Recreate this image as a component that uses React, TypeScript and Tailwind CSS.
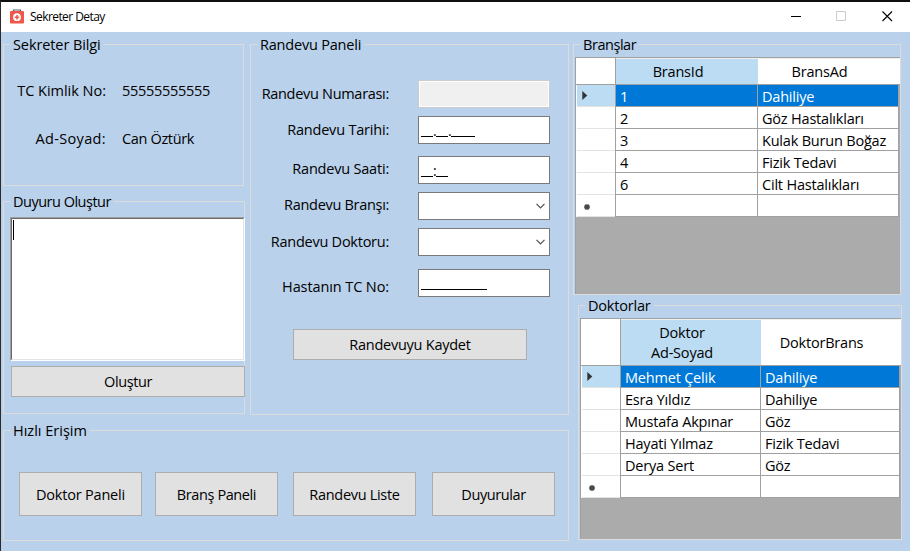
import React from "react";

type GroupProps = { title: string; titleClass?: string; className: string; children: React.ReactNode };

function GroupBox({ title, titleClass = "", className, children }: GroupProps) {
  return (
    <fieldset className={`min-w-0 shrink-0 border border-[#dcdcdc] pl-[6px] ${className}`}>
      <legend className={`h-[19px] px-[3px] leading-[19px] whitespace-nowrap ${titleClass}`}>{title}</legend>
      <div className="-ml-[6px]">{children}</div>
    </fieldset>
  );
}

function Button({ className, children }: { className: string; children: React.ReactNode }) {
  return (
    <button className={`flex shrink-0 items-center justify-center border border-[#adadad] bg-[#e1e1e1] whitespace-nowrap ${className}`}>
      {children}
    </button>
  );
}

function FormRow({ label, className, labelClass, children }: { label: string; className: string; labelClass: string; children: React.ReactNode }) {
  return (
    <div className={`flex h-7 items-start ${className}`}>
      <div className={`w-[138px] shrink-0 text-right leading-5 whitespace-nowrap ${labelClass}`}>{label}</div>
      <div className="ml-[29px] h-7 w-[132px] shrink-0">{children}</div>
    </div>
  );
}

function Select() {
  return (
    <div className="flex h-7 items-center justify-end border border-[#7a7a7a] bg-white pr-1">
      <svg width="9" height="6" viewBox="0 0 9 6" fill="none" stroke="#505050" strokeWidth="1.2">
        <path d="M.5 .8 4.5 4.8 8.5 .8" />
      </svg>
    </div>
  );
}

function Mask({ parts, className }: { parts: (number | string)[]; className: string }) {
  return (
    <div className={`flex h-7 items-end border border-[#7a7a7a] bg-white pl-[2px] ${className}`}>
      {parts.map((part, i) =>
        typeof part === "number" ? (
          <span key={i} className="h-px bg-black" style={{ width: part }} />
        ) : (
          <span key={i} className="w-[3px] text-center text-[14px] leading-[12px]">{part}</span>
        )
      )}
    </div>
  );
}

function Marker({ kind }: { kind: string }) {
  if (kind === "arrow")
    return (
      <svg className="ml-[5px]" width="6" height="9" viewBox="0 0 6 9">
        <path d="M.3 0 5.3 4.5.3 9Z" fill="#333" />
      </svg>
    );
  return (
    <svg className="mt-[3px] ml-[7px]" width="6" height="6" viewBox="0 0 6 6" stroke="#444" strokeWidth="1.3">
      <path d="M3 0v6M0 3h6M.8 .8l4.4 4.4M5.2 .8.8 5.2" />
    </svg>
  );
}

type GridProps = { heads: string[][]; rows: string[][]; size: string; headHeight: string; first: string; second: string };

function DataGrid({ heads, rows, size, headHeight, first, second }: GridProps) {
  return (
    <div className={`mt-[3px] ml-px border-t border-l border-[#a0a0a0] bg-[#ababab] ${size}`}>
      <div className={`flex border-b border-[#a0a0a0] bg-white ${headHeight}`}>
        <div className="w-10 shrink-0 border-r border-[#a0a0a0]" />
        {heads.map((lines, i) => (
          <div
            key={i}
            className={`flex shrink-0 flex-col justify-center border-t border-[#f0f0f0] pr-[18px] text-center leading-5 ${i === 0 ? `bg-[#bcdcf4] ${first}` : second}`}
          >
            {lines.map((line) => (
              <div key={line}>{line}</div>
            ))}
          </div>
        ))}
      </div>
      {rows.map((row, r) => {
        const selected = r === 0;
        const last = r === rows.length - 1;
        return (
          <div key={r} className={`flex h-[22px] leading-[24px] whitespace-nowrap ${selected ? "text-white" : ""}`}>
            <div className="flex w-10 shrink-0 border-r border-[#a0a0a0] bg-white pl-px">
              <div className={`flex grow items-center border-b border-[#e3e3e3] ${selected ? "bg-[#bcdcf4]" : ""}`}>
                {selected && <Marker kind="arrow" />}
                {last && <Marker kind="new" />}
              </div>
            </div>
            {row.map((cell, c) => (
              <div
                key={c}
                className={`shrink-0 border-r border-b border-[#a0a0a0] pl-[4px] ${selected ? "bg-[#0078d7]" : "bg-white"} ${c === 0 ? first : second}`}
              >
                {cell}
              </div>
            ))}
          </div>
        );
      })}
    </div>
  );
}

const branches = [
  ["1", "Dahiliye"],
  ["2", "Göz Hastalıkları"],
  ["3", "Kulak Burun Boğaz"],
  ["4", "Fizik Tedavi"],
  ["6", "Cilt Hastalıkları"],
  ["", ""],
];

const doctors = [
  ["Mehmet Çelik", "Dahiliye"],
  ["Esra Yıldız", "Dahiliye"],
  ["Mustafa Akpınar", "Göz"],
  ["Hayati Yılmaz", "Fizik Tedavi"],
  ["Derya Sert", "Göz"],
  ["", ""],
];

export default function App() {
  return (
    <div className="flex h-[551px] w-[910px] flex-col overflow-hidden border-t-2 border-l border-t-[#10100f] border-l-[#2a2a2a] bg-[#b9d1ea] font-['Open_Sans','Noto_Sans',sans-serif] text-[14.5px] tracking-[-0.2px] text-black">
      <header className="flex h-[30px] shrink-0 items-center bg-white pl-[9px]">
        <svg className="-mt-px" width="14" height="15" viewBox="0 0 14 15">
          <path d="M3.5 3V1h7v2" fill="none" stroke="#555e66" strokeWidth="1.2" />
          <rect y="2" width="14" height="12.5" rx="1" fill="#f0564a" />
          <circle cx="7" cy="8.2" r="3.9" fill="#fff" />
          <path d="M7 6v4.4M4.8 8.2h4.4" stroke="#f0564a" strokeWidth="1.5" />
        </svg>
        <h1 className="ml-[6px] text-[12px] leading-4 tracking-[-0.57px]">Sekreter Detay</h1>
        <div className="ml-auto flex items-center gap-[35px] pr-[17px]">
          <svg className="-mt-[2px]" width="11" height="11" viewBox="0 0 11 11"><path d="M1 5.5h10" stroke="#000" /></svg>
          <svg className="-mt-[2px]" width="11" height="11" viewBox="0 0 11 11"><path d="M.5.5h9v9h-9z" fill="none" stroke="#ccc" /></svg>
          <svg className="-mt-[2px]" width="11" height="11" viewBox="0 0 11 11"><path d="M.5.5l9.5 9.5M10 .5l-9.5 9.5" stroke="#000" strokeWidth="1.1" /></svg>
        </div>
      </header>

      <main className="flex pt-[3px] pl-[2px]">
        <div className="flex w-[570px] shrink-0 flex-col">
          <div className="flex">
            <div className="flex w-[247px] shrink-0 flex-col gap-[6px]">
              <GroupBox title="Sekreter Bilgi" titleClass="tracking-[-0.1px]" className="h-[151px] w-[241px]">
                <div className="flex flex-col gap-7 pt-[27px] leading-5">
                  <div className="flex">
                    <div className="w-[102px] text-right tracking-[-0.02px]">TC Kimlik No:</div>
                    <div className="ml-4 tracking-[-0.3px]">55555555555</div>
                  </div>
                  <div className="flex">
                    <div className="w-[102px] text-right tracking-[0.35px]">Ad-Soyad:</div>
                    <div className="ml-4 tracking-[-0.35px]">Can Öztürk</div>
                  </div>
                </div>
              </GroupBox>
              <GroupBox title="Duyuru Oluştur" titleClass="tracking-[-0.5px]" className="h-[222px] w-[242px]">
                <div className="mt-[6px] ml-[6px] h-[144px] w-[235px] border border-t-[#a0a0a0] border-r-white border-b-white border-l-[#a0a0a0]">
                  <div className="h-full border border-t-[#696969] border-r-[#e3e3e3] border-b-[#e3e3e3] border-l-[#696969] bg-white pt-px pl-px">
                    <div className="h-5 w-px bg-black" />
                  </div>
                </div>
                <Button className="mt-[5px] ml-[7px] h-[31px] w-[234px] tracking-[-0.4px]">Oluştur</Button>
              </GroupBox>
            </div>
            <GroupBox title="Randevu Paneli" className="h-[380px] w-[319px]">
              <div className="pt-[26px]">
                <FormRow label="Randevu Numarası:" className="" labelClass="pt-[4px] tracking-[-0.3px]">
                  <div className="h-7 border border-[#ccc] bg-[#f0f0f0] ring-1 ring-white ring-inset" />
                </FormRow>
                <FormRow label="Randevu Tarihi:" className="mt-2" labelClass="pt-[4px]">
                  <Mask parts={[12, ".", 12, ".", 24]} className="pb-[6px]" />
                </FormRow>
                <FormRow label="Randevu Saati:" className="mt-3" labelClass="pt-[3px]">
                  <Mask parts={[12, ":", 12]} className="pb-[6px]" />
                </FormRow>
                <FormRow label="Randevu Branşı:" className="mt-2" labelClass="pt-[3px] tracking-[-0.3px]">
                  <Select />
                </FormRow>
                <FormRow label="Randevu Doktoru:" className="mt-2" labelClass="pt-[4px] tracking-[-0.25px]">
                  <Select />
                </FormRow>
                <FormRow label="Hastanın TC No:" className="mt-[13px]" labelClass="pt-[8px] tracking-[-0.1px]">
                  <Mask parts={[66]} className="pb-[6px]" />
                </FormRow>
                <Button className="mt-8 ml-[42px] h-[31px] w-[234px] tracking-[-0.25px]">Randevuyu Kaydet</Button>
              </div>
            </GroupBox>
          </div>
          <GroupBox title="Hızlı Erişim" titleClass="tracking-[0px]" className="mt-[6px] h-[120px] w-[566px]">
            <div className="flex pt-8 pl-[15px]">
              <Button className="h-11 w-[123px] pt-px">Doktor Paneli</Button>
              <Button className="ml-[13px] h-11 w-[123px] pt-px tracking-[-0.4px]">Branş Paneli</Button>
              <Button className="ml-[15px] h-11 w-[123px] pt-px tracking-[-0.3px]">Randevu Liste</Button>
              <Button className="ml-4 h-11 w-[123px] pt-px tracking-[-0.4px]">Duyurular</Button>
            </div>
          </GroupBox>
        </div>
        <div className="shrink-0">
          <GroupBox title="Branşlar" titleClass="tracking-[-0.45px]" className="h-[260px] w-[328px]">
            <DataGrid
              heads={[["BransId"], ["BransAd"]]}
              rows={branches}
              size="h-[237px] w-[325px]"
              headHeight="h-[27px]"
              first="w-[142px]"
              second="w-[141px]"
            />
          </GroupBox>
          <GroupBox title="Doktorlar" className="mt-px ml-[5px] h-[244px] w-[324px]">
            <DataGrid
              heads={[["Doktor", "Ad-Soyad"], ["DoktorBrans"]]}
              rows={doctors}
              size="h-[221px] w-[321px]"
              headHeight="h-[47px]"
              first="w-[140px]"
              second="w-[139px]"
            />
          </GroupBox>
        </div>
      </main>
    </div>
  );
}
